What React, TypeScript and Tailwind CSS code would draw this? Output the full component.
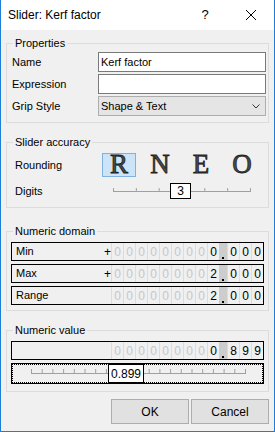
import type { ReactNode } from "react";

const sans = "font-['Liberation_Sans',Arial,sans-serif]";

function Group({ title, className, children }: { title: string; className?: string; children: ReactNode }) {
  return (
    <fieldset className={`border border-[#dcdcdc] p-0 m-0 min-w-0 ${className ?? ""}`}>
      <legend className="ml-[6px] px-[2px] text-[11px] leading-[12px] text-black">{title}</legend>
      {children}
    </fieldset>
  );
}

function DigitCells({ int, dec }: { int: string; dec: string }) {
  return (
    <div className="flex h-full text-[12px]">
      {int.split("").map((d, i) => (
        <div
          key={i}
          className={`w-[12px] border-l border-[#dcdcdc] flex items-center justify-center ${
            i < int.length - 1 ? "text-[#c3c7cd]" : "text-black"
          }`}
        >
          {d}
        </div>
      ))}
      <div className="w-[8px] bg-[#cdcdcd] flex flex-col justify-end items-center">
        <div className="w-[2px] h-[2px] bg-black mb-[1px]" />
      </div>
      {dec.split("").map((d, i) => (
        <div key={i} className="w-[12px] border-l border-[#dcdcdc] flex items-center justify-center text-black">
          {d}
        </div>
      ))}
    </div>
  );
}

function DomainRow({ label, sign, int, dec }: { label?: string; sign?: boolean; int: string; dec: string }) {
  return (
    <div className="flex h-[19px] border border-black items-stretch">
      <div className="flex-1 flex items-center pl-[4px] text-[11px]">{label}</div>
      <div className="w-[7px] flex items-center justify-start text-[12px] text-black">{sign ? "+" : ""}</div>
      <DigitCells int={int} dec={dec} />
    </div>
  );
}

export default function App() {
  const ticks = Array.from({ length: 21 }, (_, i) => 18.5 + i * 10.7);
  const digitTicks = [0, 1, 2, 4, 5, 6].map((i) => 0.5 + i * 22.83);

  return (
    <div className={`w-[275px] h-[432px] bg-[#f0f0f0] border-x border-b border-[#1c7ed6] flex flex-col text-black ${sans}`}>
      {/* title bar */}
      <div className="h-[30px] bg-white flex items-center">
        <span className="pl-[7px] text-[12px] flex-1">Slider: Kerf factor</span>
        <div className="w-[46px] h-full flex items-center justify-center text-[13px]">?</div>
        <div className="w-[46px] h-full flex items-center justify-center">
          <svg width="10" height="10" viewBox="0 0 10 10">
            <path d="M0 0 L10 10 M10 0 L0 10" stroke="#000" strokeWidth="1" />
          </svg>
        </div>
      </div>

      <div className="flex-1 flex flex-col px-[5px]">
        <Group title="Properties" className="mt-[7px]">
          <div className="pl-[5px] pr-[2px] pt-[3px] pb-[6px] flex flex-col gap-[2px] text-[11px]">
            <div className="flex items-center h-[20px]">
              <span className="w-[86px]">Name</span>
              <div className="flex-1 h-full bg-white border border-[#7a7a7a] flex items-center px-[2px]">Kerf factor</div>
            </div>
            <div className="flex items-center h-[20px]">
              <span className="w-[86px]">Expression</span>
              <div className="flex-1 h-full bg-white border border-[#7a7a7a]" />
            </div>
            <div className="flex items-center h-[20px]">
              <span className="w-[86px]">Grip Style</span>
              <div className="flex-1 h-full bg-[#e5e5e5] border border-[#adadad] flex items-center pl-[2px] pr-[5px]">
                <span className="flex-1">Shape &amp; Text</span>
                <svg width="8" height="5" viewBox="0 0 8 5">
                  <path d="M0.5 0.5 L4 4 L7.5 0.5" stroke="#333" fill="none" strokeWidth="1" />
                </svg>
              </div>
            </div>
          </div>
        </Group>

        <Group title="Slider accuracy" className="mt-[13px]">
          <div className="pl-[8px] pt-[5px] pb-[8px] text-[11px]">
            <div className="flex items-center h-[24px]">
              <span className="w-[87px]">Rounding</span>
              <div className="flex gap-[7px] font-['Liberation_Serif','Times_New_Roman',serif] text-[27px] leading-none text-[#4a4a4a] [-webkit-text-stroke:0.8px_#1e1e1e]">
                {["R", "N", "E", "O"].map((l, i) => (
                  <div
                    key={l}
                    className={`w-[34px] h-[24px] flex items-center justify-center pb-[2px] ${
                      i === 0 ? "bg-[#cce4f7] border border-[#7fb2de]" : ""
                    }`}
                  >
                    {l}
                  </div>
                ))}
              </div>
            </div>
            <div className="flex items-center h-[16px] mt-[6px]">
              <span className="w-[98px]">Digits</span>
              <div className="relative w-[138px] h-full">
                <svg width="138" height="16" className="block">
                  <line x1="0" y1="8.5" x2="138" y2="8.5" stroke="#a0a0a0" />
                  {digitTicks.map((x) => (
                    <line key={x} x1={x} y1="5" x2={x} y2="9" stroke="#a0a0a0" />
                  ))}
                </svg>
                <div className="absolute left-[57px] top-0 w-[21px] h-[16px] bg-white border border-black flex items-center justify-center text-[12px]">
                  3
                </div>
              </div>
            </div>
          </div>
        </Group>

        <Group title="Numeric domain" className="mt-[17px]">
          <div className="px-[4px] pt-[5px] pb-[5px] flex flex-col gap-[3px]">
            <DomainRow label="Min" sign int="000000000" dec="000" />
            <DomainRow label="Max" sign int="000000002" dec="000" />
            <DomainRow label="Range" int="000000002" dec="000" />
          </div>
        </Group>

        <Group title="Numeric value" className="mt-[13px]">
          <div className="px-[4px] pt-[5px] pb-[7px] flex flex-col gap-[3px]">
            <DomainRow int="000000000" dec="899" />
            <div className="relative h-[21px] border border-black flex">
              <div className="flex-1 border border-dotted border-black">
                <svg width="249" height="17" className="block">
                  <line x1="18" y1="8.5" x2="233" y2="8.5" stroke="#a0a0a0" />
                  {ticks.map((x) => (
                    <line key={x} x1={x} y1="4" x2={x} y2="9" stroke="#a0a0a0" />
                  ))}
                </svg>
              </div>
              <div className="absolute left-[96px] top-0 w-[36px] h-full bg-white border border-black flex items-center justify-center text-[12px]">
                0.899
              </div>
            </div>
          </div>
        </Group>

        <div className="flex justify-end gap-[2px] mt-[7px] text-[12px]">
          <button className="w-[78px] h-[25px] bg-[#e1e1e1] border border-[#adadad]">OK</button>
          <button className="w-[78px] h-[25px] bg-[#e1e1e1] border border-[#adadad]">Cancel</button>
        </div>
      </div>
    </div>
  );
}
